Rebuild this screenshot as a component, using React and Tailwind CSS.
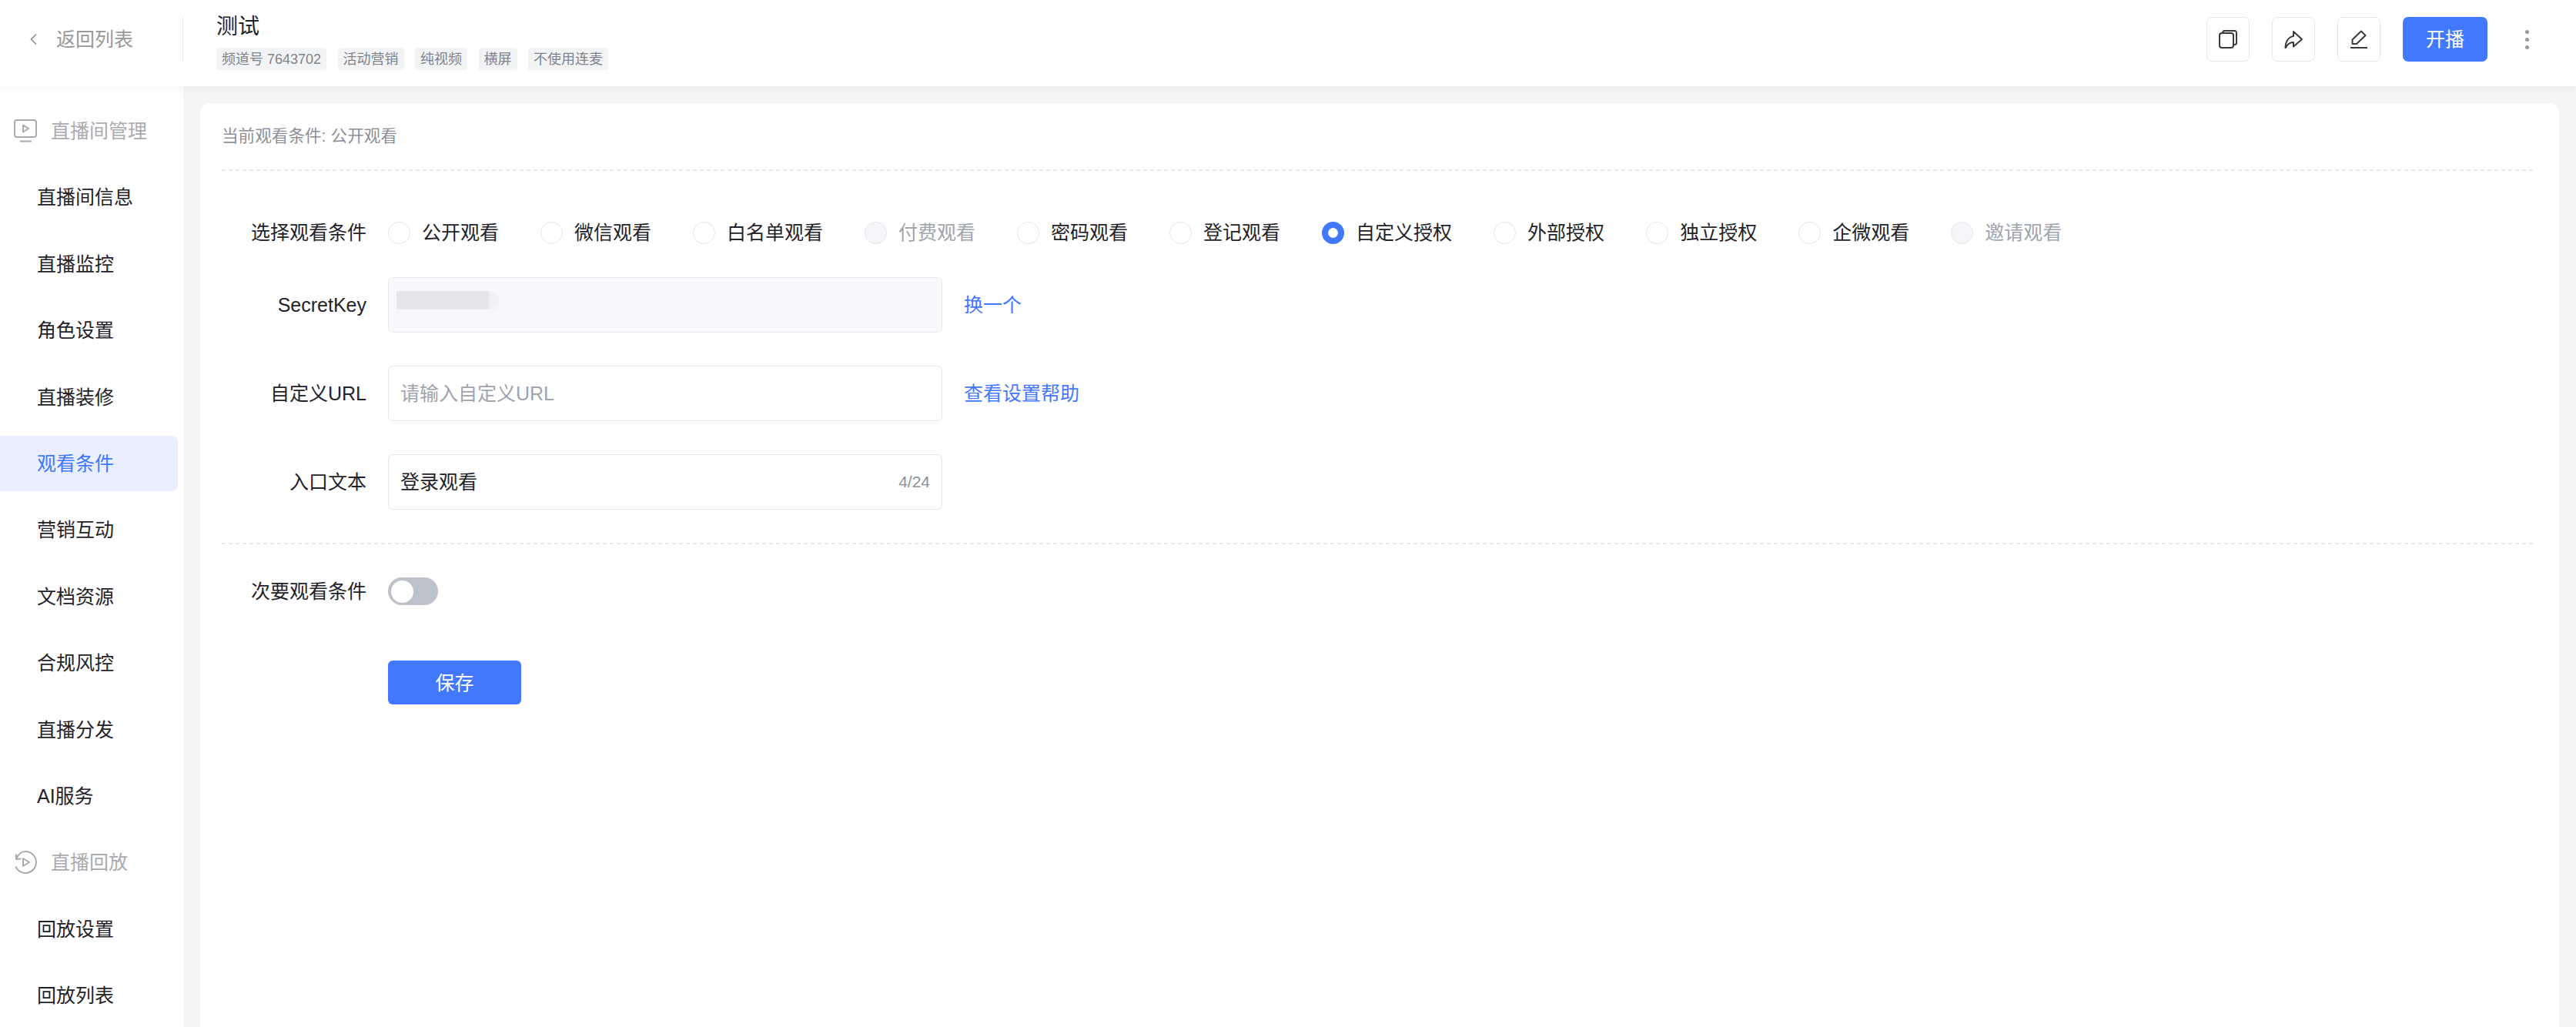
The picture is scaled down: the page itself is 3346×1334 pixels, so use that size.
import React from 'react'

const menuTop = ['直播间信息', '直播监控', '角色设置', '直播装修', '观看条件', '营销互动', '文档资源', '合规风控', '直播分发', 'AI服务']
const menuReplay = ['回放设置', '回放列表']
const tags = ['频道号 7643702', '活动营销', '纯视频', '横屏', '不使用连麦']
const radios = [
    { label: '公开观看' },
    { label: '微信观看' },
    { label: '白名单观看' },
    { label: '付费观看', disabled: true },
    { label: '密码观看' },
    { label: '登记观看' },
    { label: '自定义授权', checked: true },
    { label: '外部授权' },
    { label: '独立授权' },
    { label: '企微观看' },
    { label: '邀请观看', disabled: true },
]

const CopyIcon = () => (
    <svg width="24" height="24" viewBox="0 0 24 24" fill="none" stroke="#3a3a3a" strokeWidth="2" strokeLinejoin="round">
        <rect x="1" y="4" width="18" height="19" rx="3" />
        <path d="M5 4V3.5A2.5 2.5 0 0 1 7.5 1H20.5A2.5 2.5 0 0 1 23 3.5V16.5A2.5 2.5 0 0 1 20.5 19H19" />
    </svg>
)

const ShareIcon = () => (
    <svg width="24" height="24" viewBox="0 0 24 24" fill="none" stroke="#3a3a3a" strokeWidth="2" strokeLinejoin="round">
        <path d="M12 2L23 12L12 21.5V16C8 15.8 4 18.5 1.6 23.5C1 16.5 5 9 12 8Z" />
    </svg>
)

const EditIcon = () => (
    <svg width="24" height="24" viewBox="0 0 24 24" fill="none" stroke="#3a3a3a" strokeWidth="2" strokeLinejoin="round">
        <path d="M15 1.5L20.5 7L9 18H3.5V12.5Z" />
        <path d="M1 23H23" />
    </svg>
)

const MonitorIcon = () => (
    <svg width="30" height="30" viewBox="0 0 30 30" fill="none" stroke="#a9abb0" strokeWidth="2" strokeLinejoin="round" className="shrink-0">
        <rect x="1" y="1" width="28" height="22" rx="3" />
        <path d="M12 7.5V16.5L19 12Z" />
        <path d="M8 28.5H23" />
    </svg>
)

const ReplayIcon = () => (
    <svg width="30" height="30" viewBox="0 0 30 30" fill="none" stroke="#a9abb0" strokeWidth="2" strokeLinejoin="round" className="shrink-0">
        <path d="M3 4.5L3 11L9.5 10.5" />
        <path d="M3 11C5.5 5 10 1 15 1A14 14 0 1 1 2.2 20.7" />
        <path d="M12 10V20L20 15Z" />
    </svg>
)

const IconButton = ({ children }) => (
    <button className="w-[56px] h-[58px] flex items-center justify-center bg-white border border-[#e6e6e6] rounded-[7px]">
        {children}
    </button>
)

const Dashed = () => (
    <div className="h-[2px] bg-[repeating-linear-gradient(to_right,#e8e9ec_0,#e8e9ec_5px,transparent_5px,transparent_9px)]"></div>
)

const SideSection = ({ icon, label }) => (
    <div className="h-[72px] flex items-center pl-[18px] gap-[18px] text-[#a9abb0]">
        {icon}
        <span>{label}</span>
    </div>
)

const SideItem = ({ label }) => {
    const active = label === '观看条件'
    return (
        <div className={active
            ? 'h-[72px] w-[231px] flex items-center pl-[48px] rounded-r-[8px] bg-[#e9effe] text-[#4277ff]'
            : 'h-[72px] w-[231px] flex items-center pl-[48px] text-[#1f2329]'}>
            {label}
        </div>
    )
}

const Radio = ({ label, disabled, checked }) => {
    let circle = 'w-[29px] h-[29px] rounded-full border border-[#e5e6eb] bg-white shrink-0'
    if (disabled) circle = 'w-[29px] h-[29px] rounded-full border border-[#e5e6eb] bg-[#f5f6fa] shrink-0'
    if (checked) circle = 'w-[29px] h-[29px] rounded-full border-[8px] border-[#4277ff] bg-white shrink-0'
    return (
        <label className="flex items-center gap-[15px]">
            <span className={circle}></span>
            <span className={disabled ? 'text-[#a0a4ad]' : 'text-[#1f2329]'}>{label}</span>
        </label>
    )
}

const FormRow = ({ label, children }) => (
    <div className="flex items-center gap-[28px]">
        <div className="w-[188px] text-right text-[#1f2329] shrink-0">{label}</div>
        {children}
    </div>
)

const App = () => {
    return (
        <div className="w-[3346px] h-[1334px] overflow-hidden flex flex-col bg-[#f5f5f6] text-[25px] leading-[30px] font-['Liberation_Sans','Noto_Sans_CJK_SC',sans-serif]">
            <header className="h-[112px] shrink-0 flex items-start pt-[22px] bg-white relative z-10 shadow-[0_2px_12px_rgba(0,0,0,0.05)]">
                <div className="w-[238px] h-[58px] flex items-center border-r border-[#e8e8e8] pl-[37px] gap-[23px] text-[#999999]">
                    <svg width="13" height="16" viewBox="0 0 13 16" fill="none" stroke="#8c8c8c" strokeWidth="1.6">
                        <path d="M10 1.5L3.5 8L10 14.5" />
                    </svg>
                    <span>返回列表</span>
                </div>
                <div className="ml-[43px] flex flex-col gap-[10px] -mt-[4px]">
                    <div className="text-[28px] leading-[34px] text-[#1f2329]">测试</div>
                    <div className="flex gap-[14.5px]">
                        {tags.map((t) => (
                            <span key={t} className="h-[29px] px-[7px] flex items-center rounded-[4px] bg-[#f2f3f5] text-[18px] text-[#7f838c]">{t}</span>
                        ))}
                    </div>
                </div>
                <div className="ml-auto h-[58px] flex items-center gap-[29px]">
                    <IconButton><CopyIcon /></IconButton>
                    <IconButton><ShareIcon /></IconButton>
                    <IconButton><EditIcon /></IconButton>
                    <button className="w-[110px] h-[58px] rounded-[7px] bg-[#4277ff] text-white">开播</button>
                    <div className="w-[10px] flex flex-col items-center gap-[5px] ml-[17px] mr-[59px]">
                        <span className="w-[5px] h-[5px] rounded-full bg-[#999999]"></span>
                        <span className="w-[5px] h-[5px] rounded-full bg-[#999999]"></span>
                        <span className="w-[5px] h-[5px] rounded-full bg-[#999999]"></span>
                    </div>
                </div>
            </header>

            <div className="flex flex-1 min-h-0">
                <aside className="w-[238px] shrink-0 bg-white pt-[22px] flex flex-col gap-[14.4px]">
                    <SideSection icon={<MonitorIcon />} label="直播间管理" />
                    {menuTop.map((m) => <SideItem key={m} label={m} />)}
                    <SideSection icon={<ReplayIcon />} label="直播回放" />
                    {menuReplay.map((m) => <SideItem key={m} label={m} />)}
                </aside>

                <main className="flex-1 min-w-0 pt-[22px] pl-[22px] pr-[22px]">
                    <div className="h-[1300px] bg-white rounded-t-[14px] pl-[28px] pr-[30px]">
                        <div className="pt-[28px] pb-[28px] text-[21.6px] text-[#8d9098]">
                            当前观看条件: 公开观看
                        </div>
                        <Dashed />

                        <div className="pt-[65px] pb-[43px] flex flex-col gap-[43px]">
                            <FormRow label="选择观看条件">
                                <div className="flex items-center gap-[54px] h-[29px]">
                                    {radios.map((r) => <Radio key={r.label} {...r} />)}
                                </div>
                            </FormRow>
                            <FormRow label="SecretKey">
                                <div className="w-[720px] h-[72px] shrink-0 rounded-[6px] border border-[#e5e6eb] bg-[#f8f9fd] pl-[10px] pt-[17px]">
                                    <div className="w-[133px] h-[24px] rounded-r-[12px] bg-[linear-gradient(to_right,#e5e6ea_90%,#f0f1f4_90%)] shadow-[0_7px_0_#f5f6fa]"></div>
                                </div>
                                <a className="text-[#4277ff]">换一个</a>
                            </FormRow>
                            <FormRow label="自定义URL">
                                <input
                                    placeholder="请输入自定义URL"
                                    className="w-[720px] h-[72px] shrink-0 rounded-[6px] border border-[#e5e6eb] bg-white px-[15px] outline-none placeholder:text-[#a0a4ad]"
                                />
                                <a className="text-[#4277ff]">查看设置帮助</a>
                            </FormRow>
                            <FormRow label="入口文本">
                                <div className="w-[720px] h-[72px] shrink-0 rounded-[6px] border border-[#e5e6eb] bg-white pl-[15px] pr-[15px] flex items-center justify-between">
                                    <span className="text-[#1f2329]">登录观看</span>
                                    <span className="text-[21px] text-[#8d9098]">4/24</span>
                                </div>
                            </FormRow>
                        </div>
                        <Dashed />

                        <div className="pt-[43px]">
                            <FormRow label="次要观看条件">
                                <div className="w-[65px] h-[36px] rounded-full bg-[#bdc1ca] pl-[4px] flex items-center">
                                    <span className="w-[29px] h-[29px] rounded-full bg-white"></span>
                                </div>
                            </FormRow>
                            <button className="block ml-[216px] mt-[72px] w-[173px] h-[57px] rounded-[6px] bg-[#4277ff] text-white">保存</button>
                        </div>
                    </div>
                </main>
            </div>
        </div>
    )
}

export default App
